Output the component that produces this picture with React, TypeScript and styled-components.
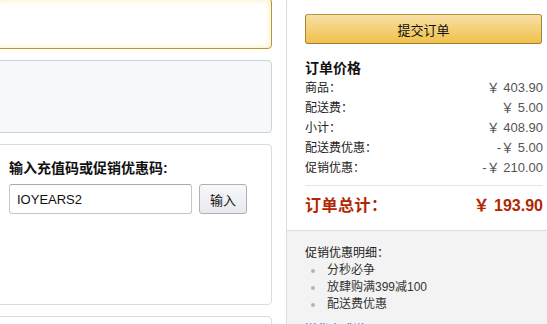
import React from "react";
import styled, { createGlobalStyle } from "styled-components";

const Global = createGlobalStyle`
  html, body { margin: 0; padding: 0; background: #fff; }
  body {
    width: 547px; height: 324px; overflow: hidden;
    font-family: "Liberation Sans", Arial, "Noto Sans CJK SC", sans-serif;
    color: #111;
  }
`;

const Page = styled.div`
  display: flex;
  gap: 14px;
  margin: -2px 0 0 -9px;
  align-items: flex-start;
`;

const LeftColumn = styled.div`
  width: 281px;
  flex: none;
  display: flex;
  flex-direction: column;
  gap: 11px;
`;

const Box = styled.div<{ $variant?: "active" | "tinted" | "plain"; $height: number }>`
  box-sizing: border-box;
  height: ${(p) => p.$height}px;
  border-radius: 4px;
  border: 1px solid
    ${(p) => (p.$variant === "active" ? "#b49838" : p.$variant === "tinted" ? "#c9d5de" : "#dcdcdc")};
  background: ${(p) => (p.$variant === "tinted" ? "#f7f8fa" : "#fff")};
  box-shadow: ${(p) => (p.$variant === "active" ? "inset 0 0 7px 1px #fbefc6" : "none")};
  padding: 13px 17px;
`;

const FieldLabel = styled.div`
  font-size: 14px;
  font-weight: bold;
  line-height: 20px;
  color: #111;
`;

const CodeRow = styled.div`
  display: flex;
  gap: 7px;
  margin-top: 6px;
`;

const CodeInput = styled.input`
  box-sizing: border-box;
  width: 183px;
  height: 30px;
  border: 1px solid #c7c7c7;
  border-top-color: #a9a9a9;
  border-radius: 3px;
  padding: 0 7px;
  font-family: "Liberation Sans", Arial, sans-serif;
  font-size: 13px;
  color: #111;
  outline: none;
`;

const GreyButton = styled.button`
  box-sizing: border-box;
  width: 48px;
  height: 30px;
  border: 1px solid #adb1b8;
  border-radius: 3px;
  background: linear-gradient(#f7f8fa, #e7e9ec);
  font-family: "Liberation Sans", "Noto Sans CJK SC", sans-serif;
  font-size: 13px;
  color: #111;
  padding: 0;
`;

const SidePanel = styled.div`
  box-sizing: border-box;
  width: 276px;
  flex: none;
  border: 1px solid #dddddd;
  border-radius: 4px;
  background: #fff;
  overflow: hidden;
`;

const SummarySection = styled.div`
  padding: 15px 18px 14px;
`;

const PlaceOrderButton = styled.button`
  box-sizing: border-box;
  display: block;
  width: 237px;
  height: 30px;
  border: 1px solid #a88734;
  border-color: #b6953e #a88734 #9c7e31;
  border-radius: 3px;
  background: linear-gradient(#f7dfa5, #f0c14b);
  font-family: "Liberation Sans", "Noto Sans CJK SC", sans-serif;
  font-size: 13px;
  color: #111;
  padding: 0;
`;

const SectionTitle = styled.div`
  margin-top: 14px;
  font-size: 14px;
  font-weight: bold;
  line-height: 20px;
  color: #111;
`;

const PriceRow = styled.div`
  display: flex;
  justify-content: space-between;
  align-items: center;
  line-height: 20px;
  font-size: 12px;
  color: #222;
`;

const Amount = styled.span`
  font-size: 13px;
  color: #555;
`;

const TotalRow = styled.div`
  margin-top: 7px;
  border-top: 1px solid #e4e4e4;
  padding-top: 10px;
  display: flex;
  justify-content: space-between;
  align-items: center;
  line-height: 20px;
  font-size: 16px;
  font-weight: bold;
  color: #b12704;
`;

const TotalLabel = styled.span`
  letter-spacing: 0.5px;
`;

const PromoSection = styled.div`
  background: #f3f3f3;
  border-top: 1px solid #dddddd;
  padding: 14px 18px 10px;
  font-size: 12px;
  line-height: 17px;
  color: #222;
`;

const PromoList = styled.div`
  display: flex;
  flex-direction: column;
`;

const PromoItem = styled.div`
  display: flex;
  align-items: center;
  gap: 12px;
  padding-left: 6px;
  color: #333;
  &::before {
    content: "";
    width: 4px;
    height: 4px;
    border-radius: 50%;
    background: #b5b5b5;
  }
`;

const HelpLink = styled.a`
  display: block;
  margin-top: 9px;
  color: #0066c0;
  text-decoration: none;
`;

const prices = [
  { label: "商品：", value: "￥ 403.90" },
  { label: "配送费：", value: "￥ 5.00" },
  { label: "小计：", value: "￥ 408.90" },
  { label: "配送费优惠：", value: "-￥ 5.00" },
  { label: "促销优惠：", value: "-￥ 210.00" },
];

const promos = ["分秒必争", "放肆购满399减100", "配送费优惠"];

export default function App() {
  return (
    <>
      <Global />
      <Page>
        <LeftColumn>
          <Box $variant="active" $height={51} />
          <Box $variant="tinted" $height={73} />
          <Box $variant="plain" $height={161}>
            <FieldLabel>输入充值码或促销优惠码:</FieldLabel>
            <CodeRow>
              <CodeInput defaultValue="IOYEARS2" />
              <GreyButton>输入</GreyButton>
            </CodeRow>
          </Box>
          <Box $variant="plain" $height={40} />
        </LeftColumn>
        <SidePanel>
          <SummarySection>
            <PlaceOrderButton>提交订单</PlaceOrderButton>
            <SectionTitle>订单价格</SectionTitle>
            {prices.map((p) => (
              <PriceRow key={p.label}>
                <span>{p.label}</span>
                <Amount>{p.value}</Amount>
              </PriceRow>
            ))}
            <TotalRow>
              <TotalLabel>订单总计：</TotalLabel>
              <span>￥ 193.90</span>
            </TotalRow>
          </SummarySection>
          <PromoSection>
            <div>促销优惠明细：</div>
            <PromoList>
              {promos.map((t) => (
                <PromoItem key={t}>{t}</PromoItem>
              ))}
            </PromoList>
            <HelpLink href="#">送货方式说明？</HelpLink>
          </PromoSection>
        </SidePanel>
      </Page>
    </>
  );
}
